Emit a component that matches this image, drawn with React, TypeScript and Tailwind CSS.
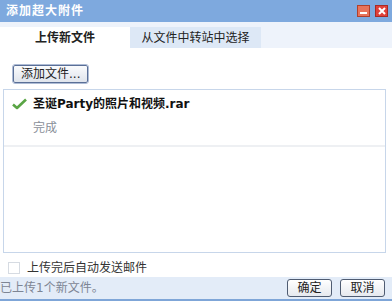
const font = "font-['DejaVu_Sans','Noto_Sans_CJK_SC',sans-serif]";

const App = () => {
  return (
    <div className={`w-[392px] h-[301px] bg-white flex flex-col overflow-hidden text-[12px] text-[#222] ${font}`}>
      {/* Title bar */}
      <div className="h-[22px] bg-[#7ea9de] flex items-center justify-between pl-[6px] pr-[4px]">
        <span className="text-white font-bold text-[12px] tracking-[1px]">添加超大附件</span>
        <div className="flex gap-[5px]">
          <div className="w-[13px] h-[12px] bg-[#e8735a] border border-[#b0402c] flex items-end justify-center pb-[2px]">
            <div className="w-[7px] h-[2px] bg-white" />
          </div>
          <div className="w-[13px] h-[12px] bg-[#e0403a] border border-[#a82a24] flex items-center justify-center">
            <svg width="8" height="8" viewBox="0 0 8 8">
              <path d="M1 1L7 7M7 1L1 7" stroke="white" strokeWidth="2" />
            </svg>
          </div>
        </div>
      </div>

      {/* Tabs */}
      <div className="h-[27px] bg-[#eef3fb] flex items-end pt-[5px]">
        <div className="w-[130px] h-full bg-white flex items-center justify-center font-bold">上传新文件</div>
        <div className="w-[131px] h-full bg-[#dde8f6] flex items-center justify-center">从文件中转站中选择</div>
      </div>

      {/* Content */}
      <div className="flex-1 flex flex-col pl-[3px] pr-[6px] pt-[17px]">
        <div className="pl-[10px]">
          <button className="h-[18px] px-[7px] bg-gradient-to-b from-[#fafbfd] to-[#dfe4ec] border border-[#5a6f97] rounded-[2px] outline outline-1 outline-[#aebcd5] text-[12px] leading-none">
            添加文件...
          </button>
        </div>

        <div className="mt-[6px] h-[164px] border border-[#c7d6ea] flex flex-col">
          <div className="h-[57px] border-b-[2px] border-[#eef0f3] flex flex-col pl-[8px] pt-[5px]">
            <div className="flex items-center gap-[6px]">
              <svg width="15" height="12" viewBox="0 0 15 12">
                <path d="M1 6.5L5 10L14 1.5" stroke="#5aa545" strokeWidth="2.6" fill="none" strokeLinejoin="round" />
              </svg>
              <span className="font-bold text-[12px] text-[#111]">圣诞Party的照片和视频.rar</span>
            </div>
            <span className="pl-[21px] mt-[6px] text-[#8a8f99]">完成</span>
          </div>
        </div>

        <div className="flex items-center mt-[6px] pl-[5px] gap-[7px]">
          <div className="w-[12px] h-[12px] border border-[#d6dbe2] bg-white" />
          <span className="text-[#333]">上传完后自动发送邮件</span>
        </div>
      </div>

      {/* Footer */}
      <div className="h-[24px] bg-[#e3ecf8] border-b-[2px] border-[#7fa6d8] flex items-center justify-between pr-[7px]">
        <span className="text-[#7d8594]">已上传1个新文件。</span>
        <div className="flex gap-[8px]">
          <button className="w-[45px] h-[18px] bg-gradient-to-b from-white to-[#e6e9ee] border border-[#4f5c72] rounded-[3px] text-[12px] leading-none">确定</button>
          <button className="w-[45px] h-[18px] bg-gradient-to-b from-white to-[#e6e9ee] border border-[#4f5c72] rounded-[3px] text-[12px] leading-none">取消</button>
        </div>
      </div>
    </div>
  );
};

export default App;
